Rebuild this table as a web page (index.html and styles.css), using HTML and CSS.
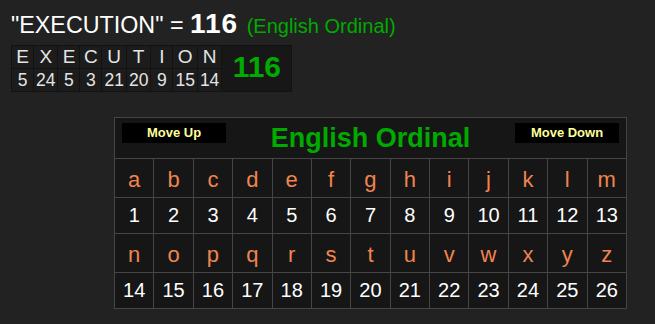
FILE: index.html
```html
<!DOCTYPE html>
<html lang="en">
<head>
    <meta charset="UTF-8">
    <meta name="viewport" content="width=device-width, initial-scale=1.0">
    <title>Gematria</title>
    <link rel="stylesheet" href="styles.css">
</head>
<body>
    <div class="page">
        <div class="result">"EXECUTION" = <span class="sum">116</span> <span class="cipher">(English Ordinal)</span></div>

        <table class="breakdown">
            <tr>
                <td>E</td><td>X</td><td>E</td><td>C</td><td>U</td><td>T</td><td>I</td><td>O</td><td>N</td>
                <td class="total" rowspan="2">116</td>
            </tr>
            <tr class="values">
                <td>5</td><td>24</td><td>5</td><td>3</td><td>21</td><td>20</td><td>9</td><td>15</td><td>14</td>
            </tr>
        </table>

        <table class="chart">
            <tr>
                <td class="chart-head" colspan="13">
                    <div class="head-row">
                        <button class="move">Move Up</button>
                        <span class="chart-title">English Ordinal</span>
                        <button class="move">Move Down</button>
                    </div>
                </td>
            </tr>
            <tr class="letters">
                <td>a</td><td>b</td><td>c</td><td>d</td><td>e</td><td>f</td><td>g</td><td>h</td><td>i</td><td>j</td><td>k</td><td>l</td><td>m</td>
            </tr>
            <tr class="numbers">
                <td>1</td><td>2</td><td>3</td><td>4</td><td>5</td><td>6</td><td>7</td><td>8</td><td>9</td><td>10</td><td>11</td><td>12</td><td>13</td>
            </tr>
            <tr class="letters">
                <td>n</td><td>o</td><td>p</td><td>q</td><td>r</td><td>s</td><td>t</td><td>u</td><td>v</td><td>w</td><td>x</td><td>y</td><td>z</td>
            </tr>
            <tr class="numbers">
                <td>14</td><td>15</td><td>16</td><td>17</td><td>18</td><td>19</td><td>20</td><td>21</td><td>22</td><td>23</td><td>24</td><td>25</td><td>26</td>
            </tr>
        </table>
    </div>
</body>
</html>
```

FILE: styles.css
```css
body {
    margin: 8px;
    background-color: #222;
    font-family: "Liberation Sans", Arial, sans-serif;
    color: #fff;
}

.page {
    padding-left: 3px;
}

.result {
    font-size: 23.3px;
    line-height: 30px;
    height: 30px;
    padding-top: 1px;
    white-space: nowrap;
}

.sum {
    font-size: 28px;
    font-weight: bold;
    letter-spacing: 1px;
}

.cipher {
    margin-left: 2px;
    font-size: 20px;
    color: #0a0;
}

/* word breakdown */
.breakdown {
    margin-top: 6px;
    border-spacing: 1px;
    background-color: #121212;
}

.breakdown td {
    width: 17px;
    padding: 0 2px;
    height: 22px;
    line-height: 22px;
    text-align: center;
    font-size: 19px;
    color: #e4e4e4;
    background-color: #1c1c1c;
}

.breakdown .values td {
    font-size: 17.5px;
}

.breakdown .total {
    width: 49px;
    padding: 0 10px 3px;
    font-size: 30px;
    font-weight: bold;
    color: #0a0;
    background-color: #171717;
}

/* cipher chart */
.chart {
    margin: 25px 0 0 103px;
    width: 513px;
    table-layout: fixed;
    border-collapse: collapse;
    background-color: #161616;
}

.chart td {
    border: 1px solid #454545;
    text-align: center;
    padding: 0;
}

.chart-head {
    height: 30px;
    padding: 5px 7px !important;
}

.head-row {
    display: flex;
    justify-content: space-between;
    align-items: flex-start;
}

.move {
    width: 104px;
    height: 20px;
    padding: 0;
    border: none;
    background-color: #000;
    color: #ff9;
    font-family: "Liberation Sans", Arial, sans-serif;
    font-size: 13px;
    font-weight: bold;
    line-height: 20px;
}

.chart-title {
    font-size: 27px;
    line-height: 30px;
    font-weight: bold;
    color: #0a0;
}

.letters td {
    height: 34px;
    padding-top: 4px;
    font-size: 22px;
    color: #f0844f;
}

.numbers td {
    height: 35px;
    font-size: 20px;
    color: #fff;
}
```
